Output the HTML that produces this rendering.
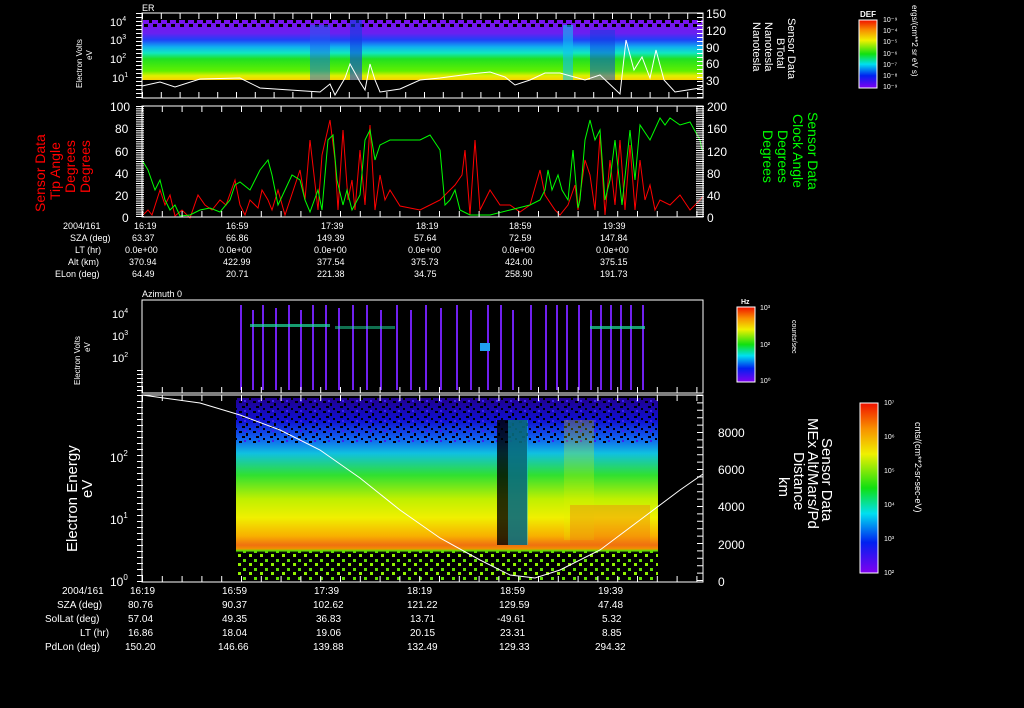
<!DOCTYPE html>
<html><head><meta charset="utf-8"><style>
html,body{margin:0;padding:0;background:#000;width:1024px;height:708px;overflow:hidden}
svg{display:block}
text{font-family:"Liberation Sans",sans-serif;fill:#fff}
</style></head><body>
<svg width="1024" height="708" viewBox="0 0 1024 708" xmlns="http://www.w3.org/2000/svg">
<defs>
<linearGradient id="p1" x1="0" y1="0" x2="0" y2="1">
<stop offset="0" stop-color="#7a10f0"/><stop offset="0.22" stop-color="#6a20f0"/>
<stop offset="0.33" stop-color="#2040f8"/><stop offset="0.45" stop-color="#10b0f0"/>
<stop offset="0.55" stop-color="#10e8c0"/><stop offset="0.65" stop-color="#20e020"/>
<stop offset="0.85" stop-color="#60f000"/><stop offset="0.93" stop-color="#e0f000"/>
<stop offset="1" stop-color="#f8d000"/></linearGradient>
<linearGradient id="p4" x1="0" y1="0" x2="0" y2="1">
<stop offset="0" stop-color="#200090"/><stop offset="0.12" stop-color="#1010d0"/>
<stop offset="0.22" stop-color="#1060f0"/><stop offset="0.3" stop-color="#10c0e0"/>
<stop offset="0.42" stop-color="#30e030"/><stop offset="0.55" stop-color="#c0f000"/>
<stop offset="0.65" stop-color="#f0f000"/><stop offset="0.75" stop-color="#f8b000"/>
<stop offset="0.8" stop-color="#f07010"/><stop offset="0.82" stop-color="#f09000"/>
<stop offset="0.83" stop-color="#60e000"/><stop offset="0.84" stop-color="#000"/>
<stop offset="1" stop-color="#000"/></linearGradient>
<linearGradient id="cb" x1="0" y1="1" x2="0" y2="0">
<stop offset="0" stop-color="#8000f0"/><stop offset="0.18" stop-color="#0020f0"/>
<stop offset="0.35" stop-color="#00e0f0"/><stop offset="0.5" stop-color="#10e010"/>
<stop offset="0.7" stop-color="#f0f000"/><stop offset="0.85" stop-color="#f89000"/>
<stop offset="1" stop-color="#f01000"/></linearGradient>
<pattern id="spk" width="14" height="10" patternUnits="userSpaceOnUse">
<rect x="1" y="1" width="3" height="2" fill="#000"/><rect x="8" y="3" width="2" height="3" fill="#000"/><rect x="4" y="6" width="3" height="2" fill="#000"/><rect x="11" y="8" width="2" height="2" fill="#000"/><rect x="6" y="0" width="2" height="2" fill="#4020f0"/>
</pattern>
<pattern id="dots" width="11" height="9" patternUnits="userSpaceOnUse">
<rect x="1" y="1" width="3" height="3" fill="#60e000"/><rect x="7" y="5" width="3" height="3" fill="#90f000"/>
</pattern>
<pattern id="top1" width="9" height="8" patternUnits="userSpaceOnUse">
<rect x="0" y="0" width="4" height="3" fill="#000"/><rect x="5" y="4" width="3" height="3" fill="#000"/>
</pattern>
</defs>

<!-- Panel 1 -->
<text x="142" y="11" font-size="9">ER</text>
<rect x="142" y="20" width="561" height="60" fill="url(#p1)"/>
<rect x="142" y="20" width="561" height="8" fill="url(#top1)"/>
<rect x="310" y="25" width="20" height="55" fill="#2060f0" opacity=".5"/>
<rect x="350" y="20" width="12" height="60" fill="#1040e0" opacity=".6"/>
<rect x="563" y="25" width="10" height="55" fill="#10c0f0" opacity=".6"/>
<rect x="590" y="30" width="25" height="50" fill="#1040e0" opacity=".5"/>
<polyline fill="none" stroke="#fff" stroke-width="1" points="142,86 160,82 175,87 200,79 240,78 260,88 290,90 320,92 330,84 335,95 345,78 350,64 360,82 365,90 370,64 375,80 380,92 400,89 420,80 440,78 470,74 490,72 505,77 515,85 530,80 545,73 560,73 585,80 600,75 620,94 626,40 634,70 642,57 650,78 656,50 664,80 675,92 700,88 703,86"/>
<rect x="142" y="13" width="561" height="85" fill="none" stroke="#fff"/>
<line x1="142" y1="95" x2="703" y2="95" stroke="#fff" stroke-width="6" stroke-dasharray="1 17.8"/>
<line x1="142" y1="16" x2="703" y2="16" stroke="#fff" stroke-width="6" stroke-dasharray="1 17.8"/>
<line x1="139" y1="13" x2="139" y2="98" stroke="#fff" stroke-width="6" stroke-dasharray="1 3"/>
<line x1="700" y1="13" x2="700" y2="98" stroke="#fff" stroke-width="6" stroke-dasharray="1 3"/>
<g font-size="11"><text x="110" y="26">10<tspan font-size="7" dy="-5">4</tspan></text><text x="110" y="44">10<tspan font-size="7" dy="-5">3</tspan></text><text x="110" y="63">10<tspan font-size="7" dy="-5">2</tspan></text><text x="112" y="82">10<tspan font-size="7" dy="-5">1</tspan></text></g>
<g font-size="12"><text x="706" y="18">150</text><text x="706" y="35">120</text><text x="706" y="52">90</text><text x="706" y="68">60</text><text x="706" y="85">30</text></g>
<text transform="translate(82,88) rotate(-90)" font-size="8">Electron Volts</text>
<text transform="translate(92,60) rotate(-90)" font-size="8">eV</text>
<g transform="rotate(90)" font-size="11"><text x="18" y="-788">Sensor Data</text><text x="38" y="-777">BTotal</text><text x="22" y="-765">Nanotesla</text><text x="22" y="-753">Nanotesla</text></g>
<text x="860" y="17" font-size="8" font-weight="bold">DEF</text>
<rect x="859" y="20" width="18" height="68" fill="url(#cb)" stroke="#fff"/>
<g font-size="7"><text x="883" y="22">10⁻⁹</text><text x="883" y="33">10⁻⁴</text><text x="883" y="44">10⁻⁵</text><text x="883" y="56">10⁻⁶</text><text x="883" y="67">10⁻⁷</text><text x="883" y="78">10⁻⁸</text><text x="883" y="89">10⁻⁹</text></g>
<text transform="translate(912,5) rotate(90)" font-size="8">ergs/(cm**2 sr eV s)</text>

<!-- Panel 2 -->
<polyline fill="none" stroke="#f00" points="142,216 148,210 152,215 160,190 165,205 170,195 175,216 182,210 190,218 198,195 205,205 212,210 220,200 226,205 235,180 240,205 245,215 250,200 258,208 262,190 268,200 272,210 278,190 285,215 295,185 300,170 305,200 310,140 318,210 322,155 330,120 335,160 338,210 343,130 348,200 352,180 355,210 360,150 365,205 370,125 375,210 380,175 385,200 390,190 400,206 420,210 430,205 440,200 455,185 462,175 465,150 470,215 475,140 480,210 490,190 500,205 510,205 520,212 530,205 540,170 545,195 555,210 560,215 568,205 575,185 578,210 585,160 590,175 595,210 600,135 605,215 610,160 615,205 620,140 625,210 630,145 635,210 640,160 645,200 650,185 655,210 660,200 670,205 680,195 690,210 700,200 703,196"/>
<polyline fill="none" stroke="#0f0" points="142,160 148,170 155,190 160,180 165,200 170,210 175,205 180,216 190,215 200,210 210,208 220,212 230,200 235,185 240,182 250,190 260,170 268,160 272,175 278,205 285,190 292,175 300,180 305,200 310,212 318,190 322,210 328,140 333,135 337,180 343,205 347,190 352,210 360,195 365,140 370,130 375,160 380,145 390,140 400,140 420,140 430,135 440,150 445,205 450,200 455,190 460,210 470,215 490,215 510,210 530,205 540,200 545,190 548,170 552,190 558,175 562,190 568,200 573,150 578,208 580,200 585,140 590,120 595,140 600,130 605,200 610,180 615,140 622,205 630,130 635,180 640,125 650,140 660,118 665,125 670,118 680,125 690,122 700,140 702,150"/>
<rect x="142" y="106" width="561" height="111" fill="none" stroke="#fff"/>
<line x1="142" y1="214" x2="703" y2="214" stroke="#fff" stroke-width="6" stroke-dasharray="1 18.8"/>
<line x1="142" y1="109" x2="703" y2="109" stroke="#fff" stroke-width="6" stroke-dasharray="1 18.8"/>
<line x1="140" y1="106" x2="140" y2="217" stroke="#fff" stroke-width="8" stroke-dasharray="1 1.2"/>
<line x1="700" y1="106" x2="700" y2="217" stroke="#fff" stroke-width="8" stroke-dasharray="1 1.2"/>
<g font-size="12"><text x="110" y="111">100</text><text x="115" y="133">80</text><text x="115" y="156">60</text><text x="115" y="178">40</text><text x="115" y="200">20</text><text x="122" y="222">0</text></g>
<g font-size="12"><text x="707" y="111">200</text><text x="707" y="133">160</text><text x="707" y="156">120</text><text x="707" y="178">80</text><text x="707" y="200">40</text><text x="707" y="222">0</text></g>
<g transform="rotate(-90)" font-size="14"><text x="-212" y="45" style="fill:#f00">Sensor Data</text><text x="-200" y="60" style="fill:#f00">Tip Angle</text><text x="-193" y="75" style="fill:#f00">Degrees</text><text x="-193" y="90" style="fill:#f00">Degrees</text></g>
<g transform="rotate(90)" font-size="14"><text x="112" y="-808" style="fill:#0f0">Sensor Data</text><text x="114" y="-793" style="fill:#0f0">Clock Angle</text><text x="130" y="-778" style="fill:#0f0">Degrees</text><text x="130" y="-763" style="fill:#0f0">Degrees</text></g>
<g font-size="9"><text x="63" y="229">2004/161</text><text x="70" y="241">SZA (deg)</text><text x="75" y="253">LT (hr)</text><text x="68" y="265">Alt (km)</text><text x="55" y="277">ELon (deg)</text>
<text x="134" y="229">16:19</text><text x="226" y="229">16:59</text><text x="321" y="229">17:39</text><text x="416" y="229">18:19</text><text x="509" y="229">18:59</text><text x="603" y="229">19:39</text>
<text x="132" y="241">63.37</text><text x="226" y="241">66.86</text><text x="317" y="241">149.39</text><text x="414" y="241">57.64</text><text x="509" y="241">72.59</text><text x="600" y="241">147.84</text>
<text x="125" y="253">0.0e+00</text><text x="219" y="253">0.0e+00</text><text x="314" y="253">0.0e+00</text><text x="408" y="253">0.0e+00</text><text x="502" y="253">0.0e+00</text><text x="596" y="253">0.0e+00</text>
<text x="129" y="265">370.94</text><text x="223" y="265">422.99</text><text x="317" y="265">377.54</text><text x="411" y="265">375.73</text><text x="505" y="265">424.00</text><text x="600" y="265">375.15</text>
<text x="132" y="277">64.49</text><text x="226" y="277">20.71</text><text x="317" y="277">221.38</text><text x="414" y="277">34.75</text><text x="505" y="277">258.90</text><text x="600" y="277">191.73</text></g>

<!-- Panel 3 -->
<text x="142" y="297" font-size="9">Azimuth 0</text>
<g fill="#7020f0">
<rect x="240" y="305" width="2" height="85"/><rect x="252" y="310" width="2" height="80"/><rect x="262" y="305" width="2" height="85"/><rect x="275" y="308" width="2" height="82"/><rect x="288" y="305" width="2" height="85"/><rect x="300" y="310" width="2" height="80"/><rect x="312" y="305" width="2" height="85"/><rect x="325" y="305" width="2" height="85"/><rect x="338" y="308" width="2" height="82"/><rect x="352" y="305" width="2" height="85"/><rect x="366" y="305" width="2" height="85"/><rect x="380" y="310" width="2" height="80"/><rect x="396" y="305" width="2" height="85"/><rect x="410" y="310" width="2" height="80"/><rect x="425" y="305" width="2" height="85"/><rect x="440" y="308" width="2" height="82"/><rect x="456" y="305" width="2" height="85"/><rect x="470" y="310" width="2" height="80"/><rect x="487" y="305" width="2" height="85"/><rect x="500" y="305" width="2" height="85"/><rect x="512" y="310" width="2" height="80"/><rect x="530" y="305" width="2" height="85"/><rect x="545" y="305" width="2" height="85"/><rect x="556" y="305" width="2" height="85"/><rect x="566" y="305" width="2" height="85"/><rect x="578" y="305" width="2" height="85"/><rect x="590" y="310" width="2" height="80"/><rect x="600" y="305" width="2" height="85"/><rect x="610" y="305" width="2" height="85"/><rect x="620" y="305" width="2" height="85"/><rect x="630" y="305" width="2" height="85"/><rect x="642" y="305" width="2" height="85"/>
</g>
<g fill="#20e0a0"><rect x="250" y="324" width="80" height="3" opacity=".7"/><rect x="335" y="326" width="60" height="3" opacity=".5"/><rect x="590" y="326" width="55" height="3" opacity=".7"/><rect x="480" y="343" width="10" height="8" fill="#20a0f0"/></g>
<rect x="142" y="300" width="561" height="93" fill="none" stroke="#fff"/>
<line x1="142" y1="390" x2="703" y2="390" stroke="#fff" stroke-width="6" stroke-dasharray="1 18.8"/>
<line x1="140" y1="370" x2="140" y2="393" stroke="#fff" stroke-width="6" stroke-dasharray="1 3"/>
<g font-size="11"><text x="112" y="318">10<tspan font-size="7" dy="-5">4</tspan></text><text x="112" y="340">10<tspan font-size="7" dy="-5">3</tspan></text><text x="112" y="362">10<tspan font-size="7" dy="-5">2</tspan></text></g>
<text transform="translate(80,385) rotate(-90)" font-size="8">Electron Volts</text>
<text transform="translate(90,352) rotate(-90)" font-size="8">eV</text>
<text x="741" y="304" font-size="7" font-weight="bold">Hz</text>
<rect x="737" y="307" width="18" height="75" fill="url(#cb)" stroke="#fff"/>
<g font-size="7"><text x="760" y="310">10³</text><text x="760" y="347">10²</text><text x="760" y="383">10⁰</text></g>
<text transform="translate(792,320) rotate(90)" font-size="7">counts/sec</text>

<!-- Panel 4 -->
<rect x="236" y="398" width="422" height="184" fill="url(#p4)"/>
<rect x="236" y="398" width="422" height="45" fill="url(#spk)"/>
<rect x="497" y="420" width="30" height="125" fill="#000" opacity=".8"/>
<rect x="508" y="420" width="20" height="125" fill="#10c0e0" opacity=".5"/>
<rect x="564" y="420" width="30" height="120" fill="#e0f000" opacity=".25"/>
<rect x="570" y="505" width="80" height="40" fill="#f07010" opacity=".35"/>
<rect x="236" y="551" width="422" height="29" fill="url(#dots)"/>
<polyline fill="none" stroke="#fff" points="142,395 200,403 240,415 280,430 320,450 360,478 400,510 440,538 480,560 510,575 535,578 560,570 600,550 640,520 680,490 703,474"/>
<rect x="142" y="395" width="561" height="187" fill="none" stroke="#fff"/>
<line x1="142" y1="579" x2="703" y2="579" stroke="#fff" stroke-width="6" stroke-dasharray="1 18.8"/>
<line x1="142" y1="398" x2="703" y2="398" stroke="#fff" stroke-width="6" stroke-dasharray="1 18.8"/>
<line x1="140" y1="395" x2="140" y2="582" stroke="#fff" stroke-width="6" stroke-dasharray="1 5"/>
<line x1="700" y1="395" x2="700" y2="582" stroke="#fff" stroke-width="6" stroke-dasharray="1 6.4"/>
<g font-size="12"><text x="110" y="462">10<tspan font-size="8" dy="-6">2</tspan></text><text x="110" y="524">10<tspan font-size="8" dy="-6">1</tspan></text><text x="110" y="586">10<tspan font-size="8" dy="-6">0</tspan></text></g>
<g font-size="12"><text x="718" y="437">8000</text><text x="718" y="474">6000</text><text x="718" y="511">4000</text><text x="718" y="549">2000</text><text x="718" y="586">0</text></g>
<text transform="translate(77,552) rotate(-90)" font-size="15">Electron Energy</text>
<text transform="translate(92,498) rotate(-90)" font-size="15">eV</text>
<g transform="rotate(90)" font-size="15"><text x="438" y="-822">Sensor Data</text><text x="418" y="-808">MEx Alt/Mars/Pd</text><text x="452" y="-794">Distance</text><text x="477" y="-779">km</text></g>
<rect x="860" y="403" width="18" height="170" fill="url(#cb)" stroke="#fff"/>
<g font-size="7"><text x="884" y="405">10⁷</text><text x="884" y="439">10⁶</text><text x="884" y="473">10⁵</text><text x="884" y="507">10⁴</text><text x="884" y="541">10³</text><text x="884" y="575">10²</text></g>
<text transform="translate(915,422) rotate(90)" font-size="9">cnts/(cm**2-sr-sec-eV)</text>
<g font-size="10"><text x="62" y="594">2004/161</text><text x="57" y="608">SZA (deg)</text><text x="45" y="622">SolLat (deg)</text><text x="80" y="636">LT (hr)</text><text x="45" y="650">PdLon (deg)</text>
<text x="130" y="594">16:19</text><text x="222" y="594">16:59</text><text x="314" y="594">17:39</text><text x="407" y="594">18:19</text><text x="500" y="594">18:59</text><text x="598" y="594">19:39</text>
<text x="128" y="608">80.76</text><text x="222" y="608">90.37</text><text x="313" y="608">102.62</text><text x="407" y="608">121.22</text><text x="499" y="608">129.59</text><text x="598" y="608">47.48</text>
<text x="128" y="622">57.04</text><text x="222" y="622">49.35</text><text x="316" y="622">36.83</text><text x="410" y="622">13.71</text><text x="497" y="622">-49.61</text><text x="602" y="622">5.32</text>
<text x="128" y="636">16.86</text><text x="222" y="636">18.04</text><text x="316" y="636">19.06</text><text x="410" y="636">20.15</text><text x="500" y="636">23.31</text><text x="602" y="636">8.85</text>
<text x="125" y="650">150.20</text><text x="218" y="650">146.66</text><text x="313" y="650">139.88</text><text x="407" y="650">132.49</text><text x="499" y="650">129.33</text><text x="595" y="650">294.32</text></g>
</svg>
</body></html>
